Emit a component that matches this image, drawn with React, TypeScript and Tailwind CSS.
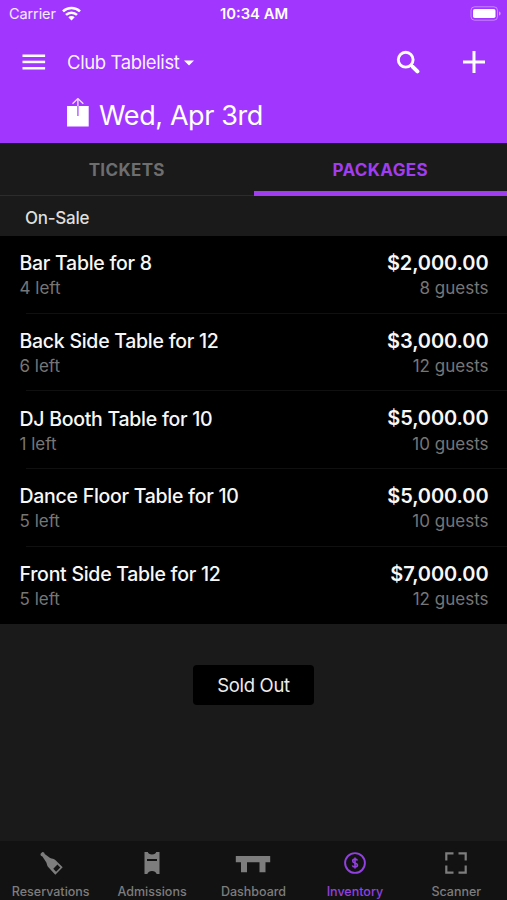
import { useState } from 'react';
import type { ReactNode } from 'react';
import clsx from 'clsx';

interface TablePackage {
  name: string;
  left: number;
  price: string;
  guests: number;
}

const packages: TablePackage[] = [
  { name: 'Bar Table for 8', left: 4, price: '$2,000.00', guests: 8 },
  { name: 'Back Side Table for 12', left: 6, price: '$3,000.00', guests: 12 },
  { name: 'DJ Booth Table for 10', left: 1, price: '$5,000.00', guests: 10 },
  { name: 'Dance Floor Table for 10', left: 5, price: '$5,000.00', guests: 10 },
  { name: 'Front Side Table for 12', left: 5, price: '$7,000.00', guests: 12 },
];

const WifiIcon = () => (
  <svg width="19" height="15" viewBox="0 0 19 15" fill="none" stroke="white" strokeWidth="2.6">
    <path d="M1 5.4C5.8 0.9 13.2 0.9 18 5.4" />
    <path d="M4 8.9c3.2-2.9 7.8-2.9 11 0" />
    <path d="M9.5 14.5 6.3 11.3c1.9-1.6 4.5-1.6 6.4 0z" fill="white" stroke="none" />
  </svg>
);

const BatteryIcon = () => (
  <svg width="31" height="15" viewBox="0 0 31 15" fill="none">
    <rect x="1" y="0.8" width="26.5" height="13.4" rx="3.6" stroke="white" strokeOpacity="0.4" />
    <rect x="3" y="3" width="22.5" height="9" rx="1.8" fill="white" />
    <path d="M29 5.5v4c1.1-.4 1.6-1.1 1.6-2s-.5-1.6-1.6-2z" fill="white" fillOpacity="0.5" />
  </svg>
);

const MenuIcon = () => (
  <svg width="24" height="18" viewBox="0 0 24 18" fill="white">
    <rect x="0.5" y="1.5" width="22.6" height="2.5" />
    <rect x="0.5" y="7.7" width="22.6" height="2.5" />
    <rect x="0.5" y="14" width="22.6" height="2.5" />
  </svg>
);

const SearchIcon = () => (
  <svg width="24" height="24" viewBox="0 0 24 24" fill="none" stroke="white">
    <circle cx="9.7" cy="9.7" r="7.4" strokeWidth="2.9" />
    <path d="M15 15l2 2" strokeWidth="3" />
    <path d="M16.8 16.8l4.6 4.6" strokeWidth="4" strokeLinecap="round" />
  </svg>
);

const PlusIcon = () => (
  <svg width="24" height="24" viewBox="0 0 24 24" stroke="white" strokeWidth="3">
    <path d="M12 1v22M1 12h22" />
  </svg>
);

const ShareIcon = () => (
  <svg width="24" height="32" viewBox="0 0 24 32" fill="none">
    <path d="M1 8h21.7v20.5H1z" fill="white" />
    <path d="M11.9 8v10" stroke="#b566ff" strokeWidth="1.5" />
    <path d="M11.9 8V0.6M6.5 5.8l5.4-5.2 5.4 5.2" stroke="#f0dcff" strokeWidth="1.4" />
  </svg>
);

const BottleIcon = () => (
  <svg width="24" height="24" viewBox="0 0 24 24">
    <path
      d="M1.4 2.9 3.3 1l1.8.5.6 1.5 5.4 3.9c2 .7 3.8.8 5.2 2.2l7.4 7.2-7.4 7.4-6.9-7.4c-1.4-1.5-1.4-3.3-2.2-5.1L3.4 5.4l-1.5-.7z"
      fill="currentColor"
    />
    <path d="m18.4 13.6 2.9 2.8-4.2 4.3-2.8-2.9z" fill="#121212" />
  </svg>
);

const TicketIcon = () => (
  <svg width="16" height="24" viewBox="0 0 16 24">
    <path
      d="M.5 1h3.300c.3 1.500 1.800 2.400 4.200 2.400S11.900 2.500 12.200 1h3.300v22h-2.800c-.8-1.800-2.300-3-4.700-3s-3.900 1.200-4.700 3H.5z"
      fill="currentColor"
    />
    <path d="M3 8h10v2H3z" fill="#121212" />
  </svg>
);

const TableIcon = () => (
  <svg width="36" height="24" viewBox="0 0 36 24" fill="currentColor">
    <path d="M.8 5h34.400v6.200h-4.700v10H24.500v-10H12v10H6v-10H.8z" />
  </svg>
);

const DollarIcon = () => (
  <svg width="24" height="24" viewBox="0 0 24 24" fill="none" stroke="currentColor">
    <circle cx="12" cy="12" r="9.9" strokeWidth="1.9" />
    <path d="M14.400 9.600c-.3-1-1.200-1.500-2.400-1.500s-2.300.5-2.300 1.800c0 2.600 4.800 1.500 4.800 4.200 0 1.300-1.100 1.900-2.500 1.900-1.400 0-2.400-.7-2.600-1.700M12 6.500v11" strokeWidth="1.6" />
  </svg>
);

const ScanIcon = () => (
  <svg width="24" height="24" viewBox="0 0 24 24" fill="none" stroke="currentColor" strokeWidth="2.2">
    <path d="M9.5 2.300H2.300v7.200M14.500 2.300h7.200v7.200M9.500 21.700H2.300v-7.200M14.500 21.700h7.200v-7.200" />
  </svg>
);

interface NavItem {
  label: string;
  icon: ReactNode;
}

const navItems: NavItem[] = [
  { label: 'Reservations', icon: <BottleIcon /> },
  { label: 'Admissions', icon: <TicketIcon /> },
  { label: 'Dashboard', icon: <TableIcon /> },
  { label: 'Inventory', icon: <DollarIcon /> },
  { label: 'Scanner', icon: <ScanIcon /> },
];

const PackageRow = ({ item, last }: { item: TablePackage; last: boolean }) => (
  <div className="relative h-[77.7px] pl-[19.5px] pr-[18.5px] pt-[13px]">
    <div className="flex items-center justify-between h-7 text-[#f7f7f7]">
      <span className="pt-0.5 text-[19.5px] font-medium tracking-[-0.27px]">{item.name}</span>
      <span className="text-[20px] font-semibold tracking-[-0.1px]">{item.price}</span>
    </div>
    <div className="flex items-center justify-between h-6 text-[17px] text-[#767676]">
      <span>{item.left} left</span>
      <span>{item.guests} guests</span>
    </div>
    {!last && <div className="absolute bottom-0 left-[26px] right-0 h-px bg-[#101010]" />}
  </div>
);

export default function App() {
  const [tab, setTab] = useState('PACKAGES');
  const [activeNav, setActiveNav] = useState('Inventory');

  return (
    <div className="flex flex-col w-[507px] h-[900px] overflow-hidden bg-[#1a1a1a] font-['Inter',sans-serif]">
      {/* Header */}
      <header className="h-[143px] shrink-0 bg-[#a137ff] text-white">
        <div className="grid grid-cols-3 items-center h-[27px] pl-[9px] pr-[6px]">
          <div className="flex items-center gap-[6px] text-[14.5px]">
            <span className="pt-px tracking-[-0.1px] text-white/90">Carrier</span>
            <WifiIcon />
          </div>
          <span className="pt-px pr-0.5 text-center text-[14.8px] font-semibold whitespace-nowrap">10:34 AM</span>
          <div className="flex justify-end"><BatteryIcon /></div>
        </div>
        <div className="flex items-center h-[70px] pl-[22px] pr-[21px]">
          <button><MenuIcon /></button>
          <button className="flex items-center gap-1 ml-[21px] pt-0.5 text-[18.5px] tracking-[-0.38px] text-white/95">
            Club Tablelist
            <svg width="10" height="6" viewBox="0 0 10 6" fill="white"><path d="M0 .5h10L5 5.500z" /></svg>
          </button>
          <button className="ml-auto"><SearchIcon /></button>
          <button className="ml-[42px]"><PlusIcon /></button>
        </div>
        <div className="flex items-center h-[34px] pl-[66px] gap-[9px]">
          <ShareIcon />
          <h1 className="pt-[3px] text-[27px] leading-8 tracking-[-0.4px]">Wed, Apr 3rd</h1>
        </div>
      </header>

      {/* Tabs */}
      <div className="flex h-[53px] shrink-0">
        {['TICKETS', 'PACKAGES'].map((name) => (
          <button
            key={name}
            onClick={() => setTab(name)}
            className={clsx(
              'flex-1 border-solid text-[17px] font-bold tracking-[0.35px]',
              tab === name
                ? 'border-b-[5px] pt-2 border-[#a03df0] text-[#a03df0]'
                : 'border-b pt-[3px] border-[#2c2c2c] text-[#6e6e6e]'
            )}
          >
            {name}
          </button>
        ))}
      </div>

      {/* Package list */}
      <div className="flex items-center h-10 shrink-0 pl-[25px] pt-1.5 text-[17px] font-medium tracking-[-0.25px] text-[#dedede]">
        On-Sale
      </div>
      <div className="shrink-0 bg-black">
        {packages.map((item, i) => (
          <PackageRow key={item.name} item={item} last={i === packages.length - 1} />
        ))}
      </div>

      <div className="flex justify-center pt-[41px]">
        <button className="w-[121px] h-10 rounded-[4px] bg-black text-[18.5px] tracking-[-0.3px] text-[#ededed]">
          Sold Out
        </button>
      </div>

      {/* Bottom navigation */}
      <nav className="grid grid-cols-5 mt-auto h-[59px] shrink-0 bg-[#121212]">
        {navItems.map(({ label, icon }) => (
          <button
            key={label}
            onClick={() => setActiveNav(label)}
            className={clsx(
              'flex flex-col items-center pt-[10px]',
              activeNav === label ? 'text-[#9340e0]' : 'text-[#7d7d7d]'
            )}
          >
            {icon}
            <span className="mt-[7px] text-[12.5px] font-medium leading-5">{label}</span>
          </button>
        ))}
      </nav>
    </div>
  );
}
